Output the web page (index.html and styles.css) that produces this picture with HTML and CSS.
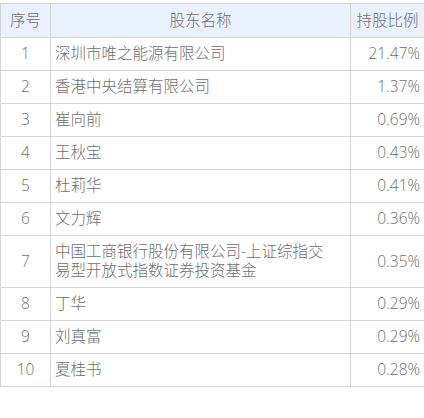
FILE: index.html
```html
<!DOCTYPE html>
<html lang="zh">
<head>
<meta charset="utf-8">
<link rel="stylesheet" href="styles.css">
</head>
<body>
<table class="holders">
  <colgroup>
    <col class="c-no">
    <col class="c-name">
    <col class="c-pct">
  </colgroup>
  <thead>
    <tr><th>序号</th><th>股东名称</th><th>持股比例</th></tr>
  </thead>
  <tbody>
    <tr><td class="no">1</td><td class="name">深圳市唯之能源有限公司</td><td class="pct">21.47%</td></tr>
    <tr><td class="no">2</td><td class="name">香港中央结算有限公司</td><td class="pct">1.37%</td></tr>
    <tr><td class="no">3</td><td class="name">崔向前</td><td class="pct">0.69%</td></tr>
    <tr><td class="no">4</td><td class="name">王秋宝</td><td class="pct">0.43%</td></tr>
    <tr><td class="no">5</td><td class="name">杜莉华</td><td class="pct">0.41%</td></tr>
    <tr><td class="no">6</td><td class="name">文力辉</td><td class="pct">0.36%</td></tr>
    <tr><td class="no">7</td><td class="name">中国工商银行股份有限公司-上证综指交易型开放式指数证券投资基金</td><td class="pct">0.35%</td></tr>
    <tr><td class="no">8</td><td class="name">丁华</td><td class="pct">0.29%</td></tr>
    <tr><td class="no">9</td><td class="name">刘真富</td><td class="pct">0.29%</td></tr>
    <tr><td class="no">10</td><td class="name">夏桂书</td><td class="pct">0.28%</td></tr>
  </tbody>
</table>
</body>
</html>
```
FILE: styles.css
```css
html, body {
  margin: 0;
  padding: 0;
  background: #ffffff;
}
body {
  padding-top: 3px;
  font-family: "Open Sans", "Noto Sans CJK SC", sans-serif;
  font-weight: 300;
  color: #6e6e6e;
}
.holders {
  width: 424px;
  border-collapse: collapse;
  table-layout: fixed;
  font-size: 15.5px;
}
.c-no { width: 50px; }
.c-name { width: 300px; }
.c-pct { width: 74px; }
.holders th,
.holders td {
  border: 1px solid #d4d4d4;
  line-height: 19px;
  padding: 6px 4px 7px;
  font-weight: 300;
}
.holders th {
  background: #e9f1fd;
  text-align: center;
  padding-top: 7px;
  white-space: nowrap;
}
.holders td.no { text-align: center; }
.holders td.name {
  text-align: left;
  padding-right: 14px;
}
.holders td.pct { text-align: right; }
```
